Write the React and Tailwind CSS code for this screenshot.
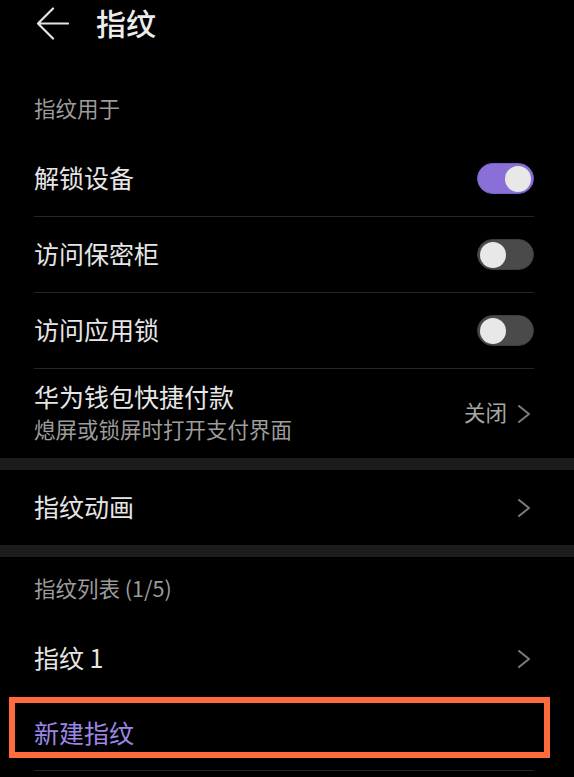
import React from "react";

const Chevron = () => (
  <svg width="14" height="18" viewBox="0 0 14 18" fill="none" className="shrink-0">
    <path d="M2 1 L12 9 L2 17" stroke="#7c7c7c" strokeWidth="2" strokeLinecap="round" strokeLinejoin="round" />
  </svg>
);

const Toggle = ({ on }) => (
  <div
    className={
      on
        ? "w-[57px] h-[31px] rounded-full bg-[#8a6fd8] border border-[#7a5fc8] flex items-center justify-end px-[2px]"
        : "w-[57px] h-[31px] rounded-full bg-[#4a4a4a] border border-[#3e3e3e] flex items-center justify-start px-[2px]"
    }
  >
    <div className="w-[26px] h-[26px] rounded-full bg-[#e8e8e8]" />
  </div>
);

const SwitchRow = ({ label, on }) => (
  <div className="ml-[34px] mr-[40px] h-[76px] flex items-center justify-between border-b border-[#262626]">
    <span className="pb-[4px] text-[25px] leading-[32px] text-[#e6e6e6]">{label}</span>
    <Toggle on={on} />
  </div>
);

const Band = () => <div className="h-[12px] bg-[#1c1c1c]" />;

export default function App() {
  return (
    <div className="w-[574px] h-[777px] bg-black overflow-hidden font-['Noto_Sans_CJK_SC',sans-serif]">
      {/* header */}
      <div className="h-[46px] flex items-center pl-[36px]">
        <svg width="33" height="33" viewBox="0 0 33 33" fill="none" className="shrink-0">
          <path d="M2 16.5 H32 M17 1.5 L2 16.5 L17 31.5" stroke="#e4e4e4" strokeWidth="2.2" strokeLinecap="round" strokeLinejoin="round" />
        </svg>
        <span className="ml-[27px] pb-[3px] text-[30px] leading-[40px] font-medium text-[#ececec]">指纹</span>
      </div>

      {/* section: usage */}
      <div className="pl-[34px] pt-[48px] pb-[19px]">
        <div className="text-[21.5px] leading-[28px] text-[#9c9c9c]">指纹用于</div>
      </div>

      <SwitchRow label="解锁设备" on />
      <SwitchRow label="访问保密柜" />
      <SwitchRow label="访问应用锁" />

      <div className="ml-[34px] mr-[43px] h-[89px] flex items-center justify-between">
        <div className="flex flex-col pb-[5px]">
          <span className="text-[25px] leading-[32px] text-[#e6e6e6]">华为钱包快捷付款</span>
          <span className="mt-[3px] text-[21.5px] leading-[28px] text-[#9c9c9c]">熄屏或锁屏时打开支付界面</span>
        </div>
        <div className="flex items-center gap-[10px]">
          <span className="pb-[3px] text-[21.5px] leading-[28px] text-[#a6a6a6]">关闭</span>
          <Chevron />
        </div>
      </div>

      <Band />

      <div className="ml-[34px] mr-[43px] h-[75px] flex items-center justify-between">
        <span className="pb-[4px] text-[25px] leading-[32px] text-[#e6e6e6]">指纹动画</span>
        <Chevron />
      </div>

      <Band />

      {/* section: fingerprint list */}
      <div className="pl-[34px] pt-[17px] pb-[19px]">
        <div className="text-[21.5px] leading-[28px] text-[#9c9c9c]">指纹列表 (1/5)</div>
      </div>

      <div className="ml-[34px] mr-[43px] h-[76px] flex items-center justify-between">
        <span className="pb-[4px] text-[25px] leading-[32px] text-[#e6e6e6]">指纹 1</span>
        <Chevron />
      </div>

      <div className="relative">
        <div className="ml-[34px] mr-[40px] h-[74px] flex items-center border-b border-[#262626]">
          <span className="pb-[4px] text-[25px] leading-[32px] text-[#9c88e4]">新建指纹</span>
        </div>
        <div className="absolute left-[9px] top-0 w-[541px] h-[61px] border-[6px] border-[#ff6b3d]" />
      </div>
    </div>
  );
}
